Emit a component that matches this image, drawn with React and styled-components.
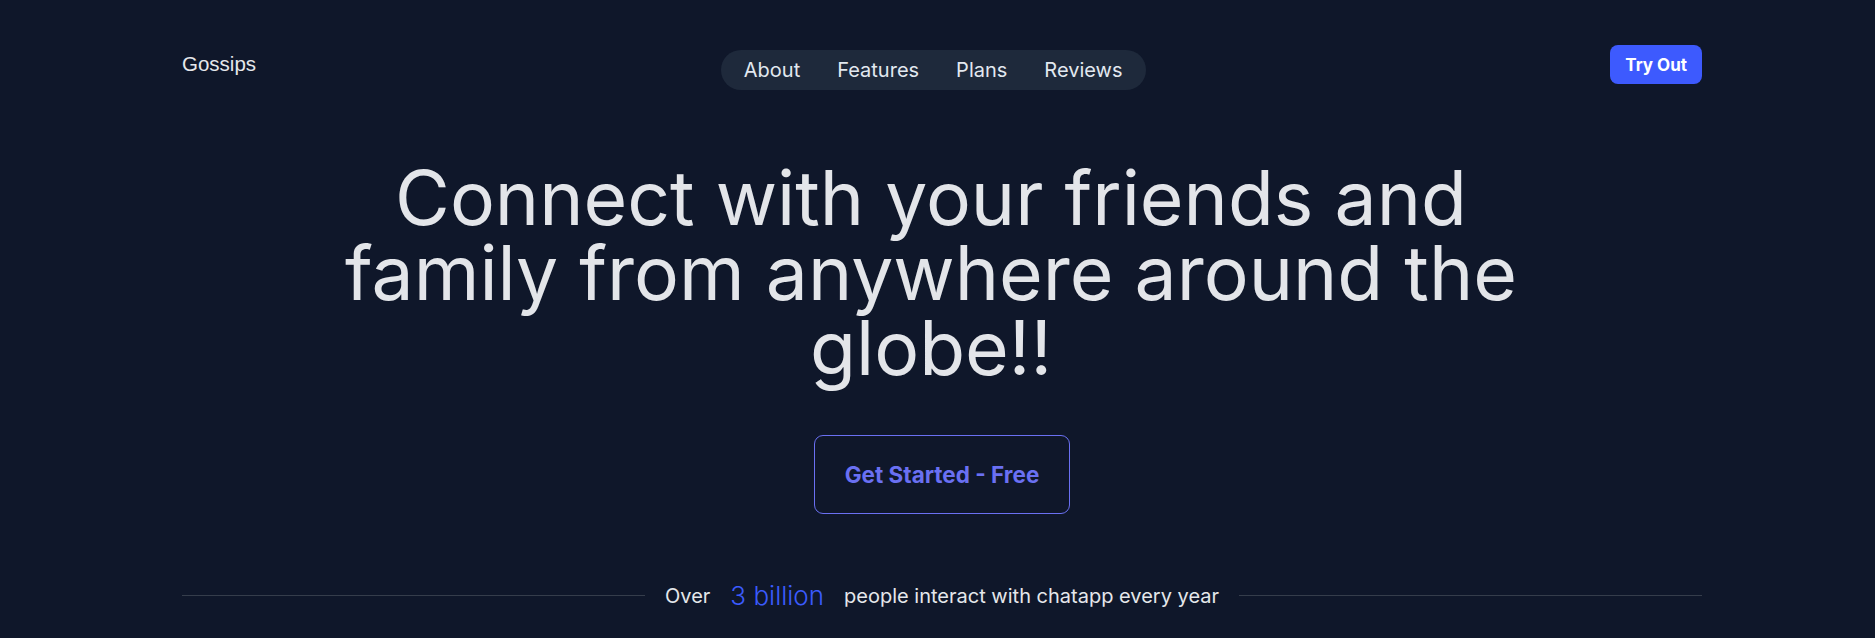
import styled, { createGlobalStyle } from 'styled-components';

const GlobalStyle = createGlobalStyle`
    * {
        box-sizing: border-box;
    }

    body {
        margin: 0;
        background-color: #0f172a;
        font-family: Inter, "Noto Sans", sans-serif;
        color: #e5e7eb;
    }
`

const Page = styled.div`
    min-height: 100vh;
    padding: 39px 173px 0 182px;
    display: flex;
    flex-flow: column nowrap;
    align-items: center;
`

const Header = styled.header`
    width: 100%;
    display: flex;
    align-items: center;
    justify-content: space-between;

    .brand {
        font-family: "Liberation Sans", Arial, sans-serif;
        font-size: 20.5px;
        line-height: 28px;
        color: #e5e7eb;
        margin-bottom: 2px;
    }
`

const NavPill = styled.nav`
    display: flex;
    align-items: center;
    gap: 37px;
    height: 40px;
    padding: 0 23px;
    margin-top: 11px;
    border-radius: 20px;
    background-color: #1e293b;

    a {
        font-size: 20px;
        color: #e2e8f0;
        text-decoration: none;
        line-height: 1;
    }
`

const TryButton = styled.button`
    height: 39px;
    padding: 0 15px;
    border: none;
    border-radius: 8px;
    background-color: #3d5afe;
    color: #ffffff;
    font-family: Inter, sans-serif;
    font-size: 17px;
    font-weight: 700;
`

const Headline = styled.h1`
    margin: 70px 0 0;
    padding-right: 22px;
    max-width: 1222px;
    text-align: center;
    font-size: 75px;
    line-height: 75px;
    font-weight: 400;
    color: #e3e5e9;
`

const StartButton = styled.button`
    margin-top: 50px;
    width: 256px;
    height: 79px;
    border: 1px solid #6a70f2;
    border-radius: 9px;
    background: transparent;
    color: #6a70f2;
    font-family: Inter, sans-serif;
    font-size: 22.5px;
    font-weight: 700;
`

const StatRow = styled.div`
    width: 100%;
    margin-top: 66px;
    display: flex;
    align-items: center;
    gap: 20px;
    font-size: 20px;
    color: #e5e7eb;

    .rule {
        flex: 1;
        height: 1px;
        background-color: #353d4b;
    }

    .big {
        font-size: 26px;
        font-weight: 300;
        color: #3b5bfd;
    }
`

function App() {
    return (
        <>
            <GlobalStyle />
            <Page>
                <Header>
                    <span className="brand">Gossips</span>
                    <NavPill>
                        <a href="#about">About</a>
                        <a href="#features">Features</a>
                        <a href="#plans">Plans</a>
                        <a href="#reviews">Reviews</a>
                    </NavPill>
                    <TryButton>Try Out</TryButton>
                </Header>

                <Headline>Connect with your friends and family from anywhere around the globe!!</Headline>

                <StartButton>Get Started - Free</StartButton>

                <StatRow>
                    <span className="rule" />
                    <span>Over</span>
                    <span className="big">3 billion</span>
                    <span>people interact with chatapp every year</span>
                    <span className="rule" />
                </StatRow>
            </Page>
        </>
    )
}

export default App;
